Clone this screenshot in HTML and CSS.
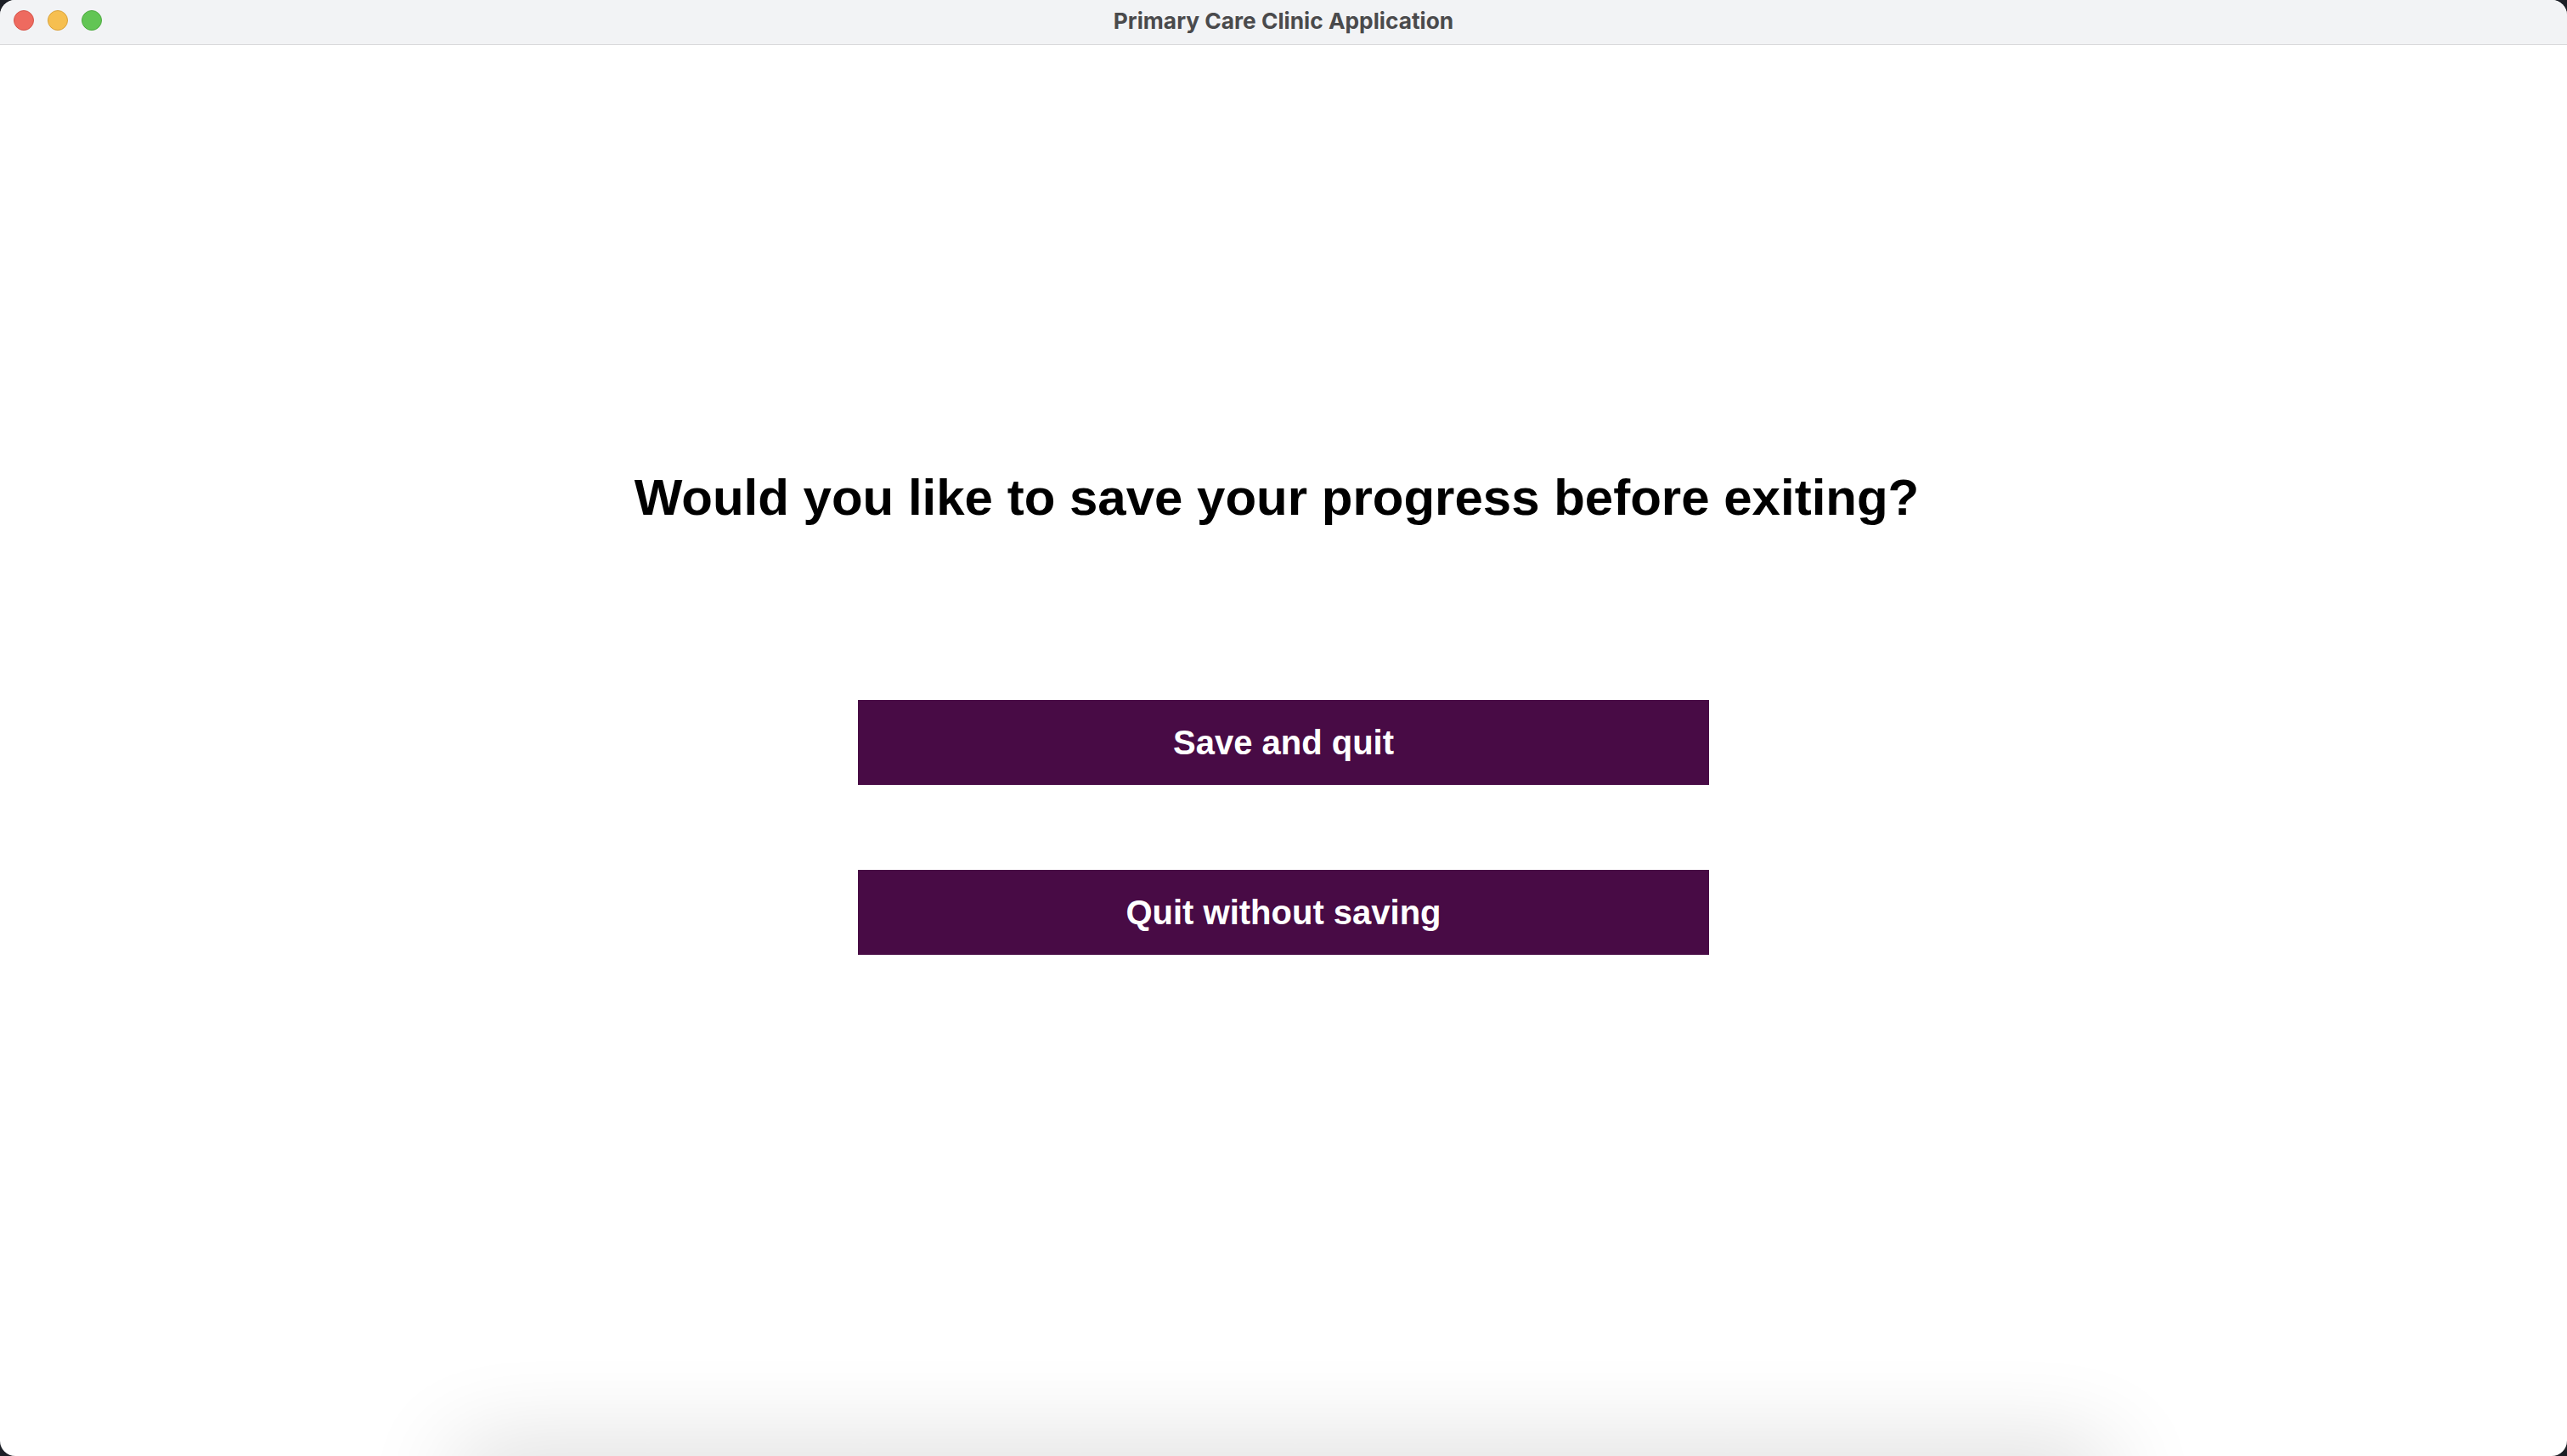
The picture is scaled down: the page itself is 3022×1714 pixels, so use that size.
FILE: index.html
```html
<!DOCTYPE html>
<html lang="en">
<head>
<meta charset="utf-8">
<title>Primary Care Clinic Application</title>
<link rel="stylesheet" href="styles.css">
</head>
<body>
<div class="window">
  <header class="titlebar">
    <div class="lights">
      <span class="light red"></span>
      <span class="light yellow"></span>
      <span class="light green"></span>
    </div>
    <div class="title">Primary Care Clinic Application</div>
  </header>
  <main class="content">
    <h1 class="question">Would you like to save your progress before exiting?</h1>
    <div class="actions">
      <button class="btn">Save and quit</button>
      <button class="btn">Quit without saving</button>
    </div>
  </main>
  <div class="dock-shadow"></div>
</div>
</body>
</html>
```
FILE: styles.css
```css
html, body {
  margin: 0;
  padding: 0;
  height: 100%;
}
body {
  background: #1c1f26;
  overflow: hidden;
}
.window {
  position: relative;
  height: 100vh;
  background: #ffffff;
  border-radius: 18px;
  overflow: hidden;
  display: flex;
  flex-direction: column;
}
.titlebar {
  position: relative;
  height: 52px;
  flex: none;
  background: #f2f3f5;
  border-bottom: 1px solid #d9d9db;
  display: flex;
  align-items: center;
  justify-content: center;
}
.lights {
  position: absolute;
  left: 16px;
  top: 12px;
  display: flex;
  gap: 16px;
}
.light {
  width: 24px;
  height: 24px;
  border-radius: 50%;
  box-sizing: border-box;
}
.red { background: #ee6a5f; border: 1px solid #d5554b; }
.yellow { background: #f6bf50; border: 1px solid #d9a23c; }
.green { background: #62c554; border: 1px solid #4fab41; }
.title {
  font-family: "Inter", "Liberation Sans", sans-serif;
  font-weight: 700;
  font-size: 26.3px;
  color: #4a4a4c;
  margin-top: -4px;
}
.content {
  flex: 1;
  display: flex;
  flex-direction: column;
  align-items: center;
  padding-top: 498px;
}
.question {
  margin: 0;
  padding-right: 16px;
  font-family: "Liberation Sans", Arial, sans-serif;
  font-weight: 700;
  font-size: 60px;
  line-height: 69px;
  color: #000000;
}
.actions {
  margin-top: 204px;
  display: flex;
  flex-direction: column;
  gap: 100px;
}
.btn {
  width: 1002px;
  height: 100px;
  border: none;
  border-radius: 0;
  background: #480b45;
  color: #ffffff;
  font-family: "Liberation Sans", Arial, sans-serif;
  font-weight: 700;
  font-size: 40px;
  padding: 0;
  cursor: pointer;
}
.dock-shadow {
  position: absolute;
  left: 540px;
  width: 1940px;
  bottom: -60px;
  height: 60px;
  border-radius: 40px;
  box-shadow: 0 0 110px 10px rgba(0, 0, 0, 0.16);
}
```
